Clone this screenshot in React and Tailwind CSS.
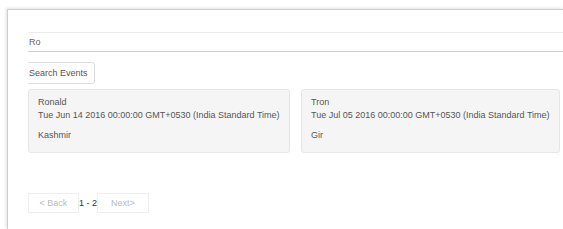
import React from "react";

const eventos = [
  { nome: "Ronald", data: "Tue Jun 14 2016 00:00:00 GMT+0530 (India Standard Time)", local: "Kashmir" },
  { nome: "Tron", data: "Tue Jul 05 2016 00:00:00 GMT+0530 (India Standard Time)", local: "Gir" },
];

export default function App() {
  return (
    <div
      className="w-[563px] h-[229px] overflow-hidden bg-white pt-[9px] pl-[7px] text-[9px] leading-[12.8px] text-[#555]"
      style={{ fontFamily: '"Liberation Sans", Arial, sans-serif' }}
    >
      <div className="h-full border-t border-l border-[#cdcdcd] shadow-[-1px_-1px_3px_rgba(0,0,0,0.12)] pl-[20px] pt-[22px]">
        <div className="h-[20px] border-t border-[#ececec] border-b border-b-[#cfcfcf] flex items-center pl-[1px] text-[#666]">
          Ro
        </div>

        <button className="mt-[10px] h-[22px] w-[67px] border border-l-0 border-[#dcdcdc] rounded-r-[3px] bg-white text-left pl-[1px] text-[#555] whitespace-nowrap">
          Search Events
        </button>

        <div className="mt-[5px] mr-[3px] grid grid-cols-[262px_259px] gap-[11px]">
          {eventos.map((ev, i) => (
            <div key={i} className="h-[64px] border border-[#e6e6e6] rounded-[3px] bg-[#f5f5f5] pt-[6px] pl-[9px] text-[#555]">
              <p>{ev.nome}</p>
              <p className="whitespace-nowrap">{ev.data}</p>
              <p className="mt-[7px]">{ev.local}</p>
            </div>
          ))}
        </div>

        <div className="mt-[40px] flex items-center h-[20px]">
          <button className="h-[20px] w-[51px] border border-[#eeeeee] bg-white text-[#bbb] text-center whitespace-nowrap">
            &lt; Back
          </button>
          <span className="w-[18px] text-center whitespace-nowrap text-[#333]">1 - 2</span>
          <button className="h-[20px] w-[52px] border border-[#eeeeee] bg-white text-[#bbb] text-center whitespace-nowrap">
            Next&gt;
          </button>
        </div>
      </div>
    </div>
  );
}
